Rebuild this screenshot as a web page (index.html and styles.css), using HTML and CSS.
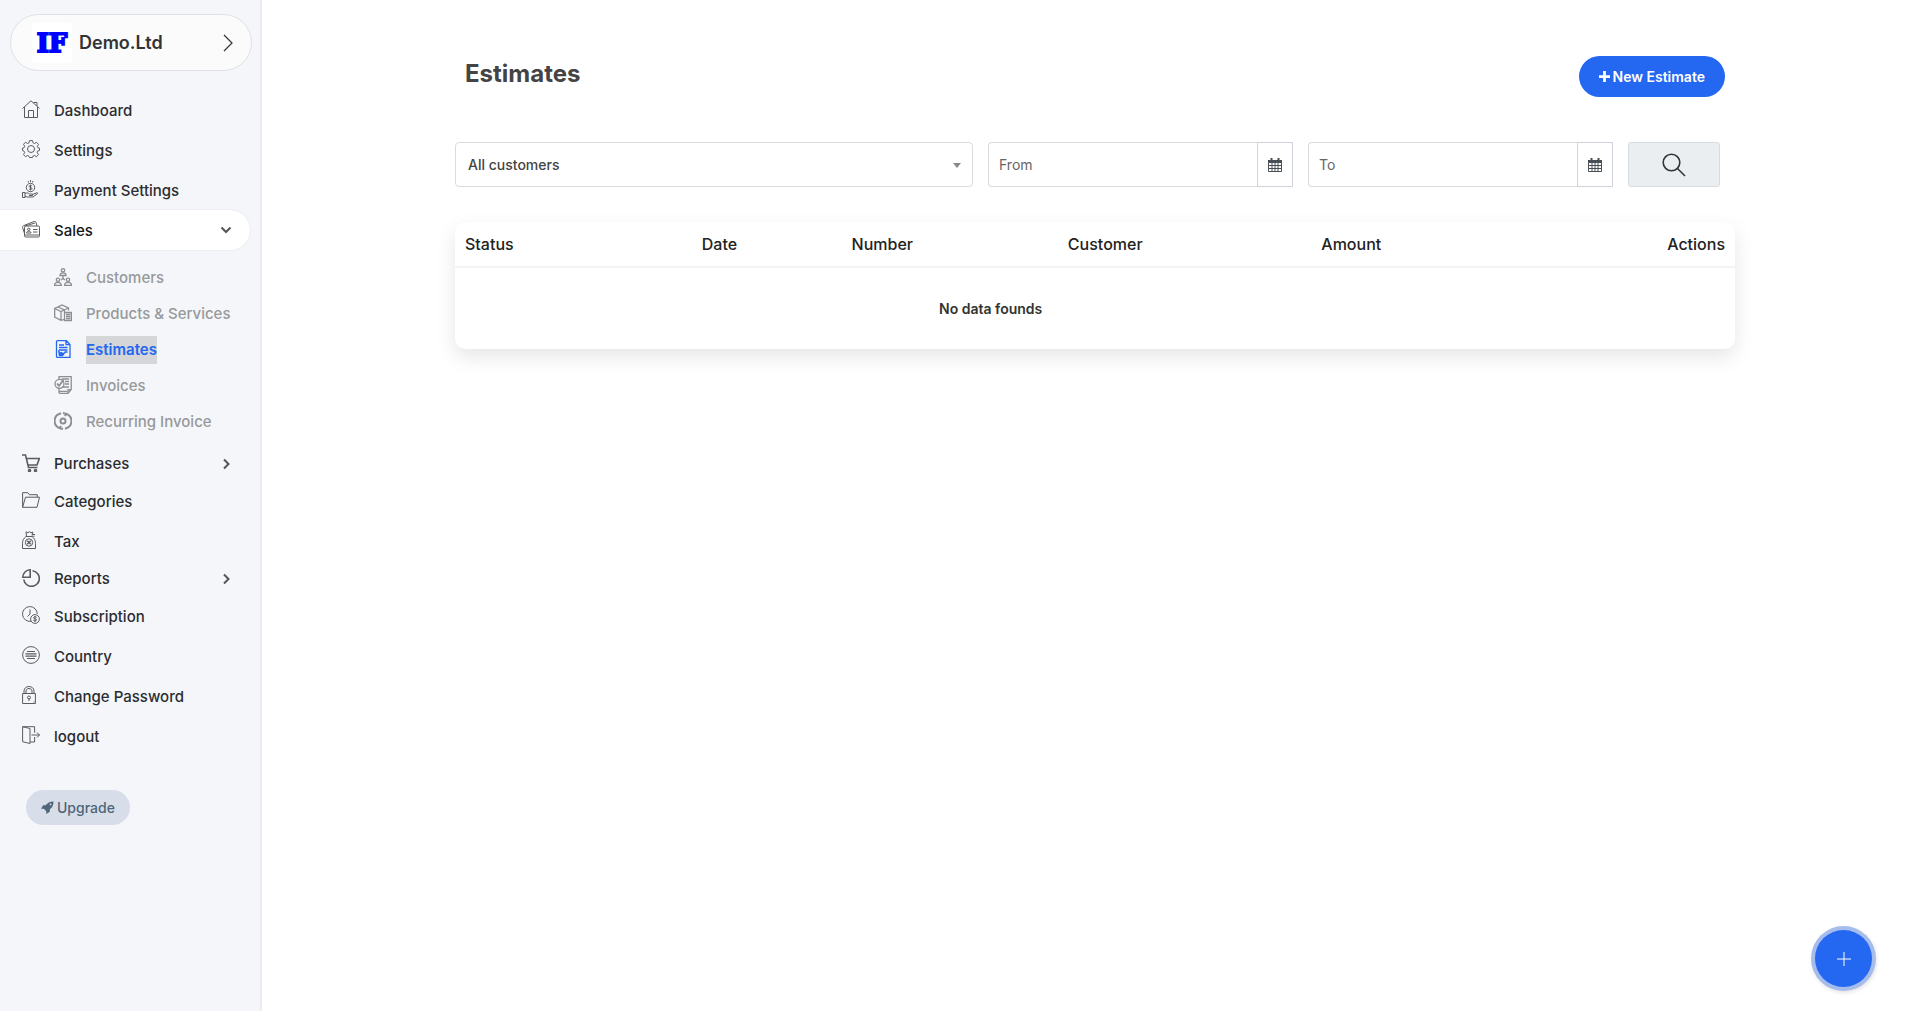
FILE: index.html
```html
<!DOCTYPE html>
<html lang="en">

<head>
    <meta charset="UTF-8">
    <meta name="viewport" content="width=device-width, initial-scale=1.0">
    <title>Estimates</title>
    <link rel="stylesheet" href="styles.css">
</head>

<body>

    <aside class="sidebar">
        <button class="company" type="button">
            <span class="company-logo">IF</span>
            <span class="company-name">Demo.Ltd</span>
            <svg class="company-arrow" viewBox="0 0 10 18"><path d="M1 1l8 8-8 8" /></svg>
        </button>

        <nav>
            <ul class="menu">
                <li><a href="#">
                    <svg class="icon" viewBox="0 0 18 18"><path d="M.5 8.500L9 .8l8.500 7.700M2.500 7v10.500h13V7M6.500 17.500v-7h5v7M11.500 2.500h3.500v3.500" /></svg>
                    <span>Dashboard</span>
                </a></li>
                <li><a href="#">
                    <svg class="icon" viewBox="0 0 18 18"><path d="M7.500.6h3l.5 2.200 1.500.7 2-1.200 2 2.100-1.200 2 .7 1.400 1.500.3v2.300l-1.700.6-.6 1.600 1.300 2-2.100 2.100-2-1.200-1.500.7-.4 1.300h-3l-.5-1.300-1.500-.7-2 1.200-2-2.100 1.200-2-.7-1.500L.5 10.400V8.100L2 7.800l.7-1.500-1.200-2 2-2.100 2 1.300L7 2.800z" /><circle cx="9" cy="9" r="3.500" /></svg>
                    <span>Settings</span>
                </a></li>
                <li><a href="#">
                    <svg class="icon" viewBox="0 0 18 18"><circle cx="8.500" cy="7.500" r="4.200" /><path d="M10 6c-.8-.9-3-.6-2.800.5.200 1.200 2.900.8 2.800 2-.1 1.200-2.300 1.200-3 .3M8.500 4.500v6M8.500 0v2M6.300 1v1.500M10.700 1v1.500M.5 12.500H3v5H.5zM3 13.500c2-1 3.500-.5 4.500.5h3v1.500H7M10.500 14.500l4.500-1.800c.8 0 .8.700.3 1.100L11 17H5l-2-.8" /></svg>
                    <span>Payment Settings</span>
                </a></li>
                <li class="open"><a href="#">
                    <svg class="icon" viewBox="0 0 18 18"><rect x="2.500" y="6" width="15" height="11" rx="1.200" /><path d="M2.500 13.500L.6 7.500C.4 6.500.8 6 1.500 5.700L12 1.500c1-.3 1.700 0 2 .8L15 6M3 6l10-3M2.500 15h15M11 9.500h4.500M11 12h4.500M4.500 13c0-2.500 4.500-2.500 4.500 0z" /><circle cx="6.800" cy="9.300" r="1.200" /></svg>
                    <span>Sales</span>
                    <svg class="chevron" viewBox="0 0 12 12"><path d="M1.500 3.500L6 8l4.500-4.500" /></svg>
                </a>
                    <ul class="submenu">
                        <li><a href="#">
                            <svg class="icon" viewBox="0 0 18 18"><circle cx="9" cy="2.300" r="1.700" /><circle cx="4" cy="11.800" r="1.700" /><circle cx="14" cy="11.800" r="1.700" /><path d="M6 7.500c0-3.500 6-3.500 6 0zM.6 17.400c0-4 6.800-4 6.800 0zM10.600 17.400c0-4 6.800-4 6.800 0zM9 7.500v3M9 10.500l-2 1.500M9 10.500l2 1.500" /></svg>
                            <span>Customers</span>
                        </a></li>
                        <li><a href="#">
                            <svg class="icon" viewBox="0 0 18 18"><path d="M10 15.500l-3 .9L.7 13V4.500L8 1l6.500 3v2.500M.7 4.500L7 7.500l7.500-3.500M7 7.500v9M4 3l6.500 3v3.500M10.500 8.500h7v8h-7zM12 10.500h4.500M12 12.500h4.500M12 14.500h4.500" /></svg>
                            <span>Products &amp; Services</span>
                        </a></li>
                        <li class="active"><a href="#">
                            <svg class="icon" viewBox="0 0 18 18"><path d="M3.500.7h8.800L16 4.500v12.800H3.500c-.7 0-1-.3-1-.9V1.600c0-.6.300-.9 1-.9zM12 .7v4h4M5 5h5M5 7.500h8.500M5 10h8.500M10.500 12h3" /><path d="M4.800 11.500l1.700 1.700 1-.7 1 1 2-.6-2 2.600H5.500z" fill="currentColor" /></svg>
                            <span>Estimates</span>
                        </a></li>
                        <li><a href="#">
                            <svg class="icon" viewBox="0 0 18 18"><path d="M5 3V.7h12.200v12.800L14 17.400H6.500c-1 0-1.500-.5-1.500-1.500V12M17 13.700h-3v3.500M5 15.300h8M7.500 3h7.500M11 5.500h4M11 8h4M8 11h7" /><circle cx="5.500" cy="7.800" r="4.500" /><path d="M3 7.500l2 2.300L9.500 4" stroke-width="1.800" /></svg>
                            <span>Invoices</span>
                        </a></li>
                        <li><a href="#">
                            <svg class="icon icon-bold" viewBox="0 0 18 18"><circle cx="9" cy="9" r="2.500" /><path d="M7 1.300C-1.500 3.500-1.500 14 6.500 16.500M11 16.700c8.500-2.200 8.500-12.700.5-15.200M9 1l3 .8-1 2.200M9 17l-3-.8 1-2.200" /></svg>
                            <span>Recurring Invoice</span>
                        </a></li>
                    </ul>
                </li>
                <li class="has-children"><a href="#">
                    <svg class="icon icon-bold" viewBox="0 0 18 18"><path d="M0 1h3.500l3 12.500h9M4.500 4.500h12.800l-2.300 6.500H6" /><circle cx="7.500" cy="16.500" r="1" /><circle cx="13.500" cy="16.500" r="1" /></svg>
                    <span>Purchases</span>
                    <svg class="chevron" viewBox="0 0 12 12"><path d="M4 1.500L8.500 6 4 10.500" /></svg>
                </a></li>
                <li><a href="#">
                    <svg class="icon" viewBox="0 0 18 18"><path d="M.6 16.300V1.700h5.200l1.500 2h8v2.500M.6 16.300L3.500 6.200h14l-2.500 10.100z" /></svg>
                    <span>Categories</span>
                </a></li>
                <li><a href="#">
                    <svg class="icon" viewBox="0 0 18 18"><path d="M4 5.500C1.500 7.500.5 9.500.5 12.500v5h13v-5c0-3-1-5-3.500-7zM4.500 5.500L4 .8l2 1 1.500-1.200L9 1.800l2-.8-1 2.500h3M9.500 5l3 .3" /><circle cx="7" cy="11.500" r="3.700" /><path d="M5.200 9.800l3.600 3.500M8.800 9.800l-3.600 3.500" stroke-width="1.300" /></svg>
                    <span>Tax</span>
                </a></li>
                <li class="has-children"><a href="#">
                    <svg class="icon icon-bold" viewBox="0 0 18 18"><path d="M8.200.8v7.400H.8A7.500 7.500 0 0 1 8.200.8zM10.500 1.800A7.800 7.800 0 1 1 1.800 10.500" /></svg>
                    <span>Reports</span>
                    <svg class="chevron" viewBox="0 0 12 12"><path d="M4 1.500L8.500 6 4 10.500" /></svg>
                </a></li>
                <li><a href="#">
                    <svg class="icon" viewBox="0 0 18 18"><path d="M9 15.300A7.400 7.400 0 1 1 15.300 8M8 3.500V8l-2.500 2.500" /><circle cx="13" cy="13" r="4.400" /><path d="M14.700 11.400c-.8-1-3.400-.7-3.200.5.200 1.200 3.200.8 3.100 2-.1 1.300-2.600 1.300-3.300.3M13 10v6" /></svg>
                    <span>Subscription</span>
                </a></li>
                <li><a href="#">
                    <svg class="icon" viewBox="0 0 18 18"><circle cx="9" cy="9" r="8.400" /><path d="M5 5.500h8M3.500 7.800h11M3.500 10.200h11M5 12.500h8" stroke-width="1.200" /></svg>
                    <span>Country</span>
                </a></li>
                <li><a href="#">
                    <svg class="icon" viewBox="0 0 18 18"><path d="M.6 7.500h12.800v10H.6zM2 7.500V5c0-6 10-6 10 0v2.500M4 7.500V5c0-3.300 6-3.300 6 0v2.500M7 12v3M11.500 16h1" /><circle cx="7" cy="11.500" r="1.500" /></svg>
                    <span>Change Password</span>
                </a></li>
                <li><a href="#">
                    <svg class="icon" viewBox="0 0 18 18"><path d="M.6.7L8 2.500v15L.6 15.700zM.6.7h12v6M12.600 11v5H8M9.500 9h8M15 6.500L17.500 9 15 11.500" /></svg>
                    <span>logout</span>
                </a></li>
            </ul>
        </nav>

        <button class="upgrade" type="button">
            <svg viewBox="0 0 14 14"><path d="M13.500.5C9.500.5 7 2 5 4.500H2.300L0 8.300h3l2.700 2.700v3l3.800-2.300V9c2.500-2 4-4.500 4-8.500zM10.300 4.700a1 1 0 1 1 0-2 1 1 0 0 1 0 2z" /></svg>
            Upgrade
        </button>
    </aside>

    <main class="main">
        <div class="container">
            <header class="page-header">
                <h1>Estimates</h1>
                <button class="btn-new" type="button">
                    <svg viewBox="0 0 12 12"><path d="M6 0v12M0 6h12" /></svg>
                    New Estimate
                </button>
            </header>

            <form class="filters">
                <div class="select-wrap">
                    <select aria-label="Customer">
                        <option>All customers</option>
                    </select>
                </div>
                <div class="date-group">
                    <input type="text" placeholder="From" aria-label="From">
                    <button type="button" aria-label="Pick start date">
                        <svg viewBox="0 0 14 14"><path class="fill" d="M0 2h14v3H0z" /><path d="M.5 2.500h13v11H.5zM.5 7.500h13M.5 10.500h13M4 5v8.500M7 5v8.500M10 5v8.500" /><path class="ring" d="M3.500 0v3.500M10.500 0v3.500" /></svg>
                    </button>
                </div>
                <div class="date-group">
                    <input type="text" placeholder="To" aria-label="To">
                    <button type="button" aria-label="Pick end date">
                        <svg viewBox="0 0 14 14"><path class="fill" d="M0 2h14v3H0z" /><path d="M.5 2.500h13v11H.5zM.5 7.500h13M.5 10.500h13M4 5v8.500M7 5v8.500M10 5v8.500" /><path class="ring" d="M3.500 0v3.500M10.500 0v3.500" /></svg>
                    </button>
                </div>
                <button class="btn-search" type="submit" aria-label="Search">
                    <svg viewBox="0 0 24 24"><circle cx="9.500" cy="9.500" r="8.300" /><path d="M15 15l8 8" /></svg>
                </button>
            </form>

            <div class="card">
                <table>
                    <colgroup>
                        <col class="col-status">
                        <col class="col-date">
                        <col class="col-number">
                        <col class="col-customer">
                        <col class="col-amount">
                        <col class="col-actions">
                    </colgroup>
                    <thead>
                        <tr>
                            <th>Status</th>
                            <th>Date</th>
                            <th>Number</th>
                            <th>Customer</th>
                            <th>Amount</th>
                            <th class="right">Actions</th>
                        </tr>
                    </thead>
                    <tbody>
                        <tr>
                            <td class="empty" colspan="5">No data founds</td>
                            <td></td>
                        </tr>
                    </tbody>
                </table>
            </div>
        </div>
    </main>

    <button class="fab" type="button" aria-label="Add">
        <svg viewBox="0 0 14 14"><path d="M7 0v14M0 7h14" /></svg>
    </button>

</body>

</html>
```
FILE: styles.css
```css
* {
    box-sizing: border-box;
}

body {
    margin: 0;
    min-height: 100vh;
    display: flex;
    font-family: Inter, "Liberation Sans", sans-serif;
    font-size: 14px;
    color: #2b2d30;
    background: #fff;
}

button,
input,
select {
    font-family: inherit;
    font-size: 14px;
}

button {
    cursor: pointer;
}

svg {
    display: block;
    flex: none;
    fill: none;
    stroke: currentColor;
}

/* Sidebar */
.sidebar {
    width: 262px;
    flex: none;
    padding-top: 14px;
    background: #f4f6fa;
    border-right: 2px solid #ececee;
}

.company {
    display: flex;
    align-items: center;
    width: 242px;
    height: 57px;
    margin: 0 0 19px 10px;
    padding: 0 18px 0 21px;
    background: #fbfbfb;
    border: 1px solid #dfe1e6;
    border-radius: 29px;
    color: #333;
}

.company-logo {
    width: 40px;
    height: 40px;
    margin-right: 7px;
    background: #fff;
    border-radius: 4px;
    font: bold 26px/40px "DejaVu Serif", serif;
    color: #0000ff;
    text-align: center;
    -webkit-text-stroke: 2px #0000ff;
}

.company-name {
    flex: 1;
    text-align: left;
    font-size: 18px;
    font-weight: 600;
}

.company-arrow {
    width: 10px;
    height: 18px;
    stroke-width: 1.2;
}

.menu,
.submenu {
    list-style: none;
    margin: 0;
    padding: 0;
}

.menu a {
    display: flex;
    align-items: center;
    height: 40px;
    margin-right: 10px;
    padding: 0 18px 0 22px;
    color: #2b2d30;
    font-size: 15px;
    font-weight: 500;
    text-decoration: none;
}

.menu a span {
    flex: 1;
}

.menu .has-children > a {
    height: 35px;
}

.menu .open > a {
    background: #fff;
    border-radius: 0 20px 20px 0;
    box-shadow: 0 0 2px rgba(0, 0, 0, 0.1);
    color: #151515;
}

.icon {
    width: 18px;
    height: 18px;
    margin: 0 14px 2px 0;
    color: #5a5c5f;
    stroke-width: 1;
}

.icon-bold {
    stroke-width: 1.6;
}

.chevron {
    width: 12px;
    height: 12px;
    color: #555;
    stroke-width: 2;
}

.submenu {
    padding: 10px 0 6px;
}

.menu .submenu a {
    height: 36px;
    padding: 0 0 0 54px;
    color: #97999b;
}

.submenu .icon {
    color: #8c8e90;
    stroke-width: 1.3;
}

.submenu .icon-bold {
    stroke-width: 2;
}

.menu .submenu span {
    flex: none;
    line-height: 28px;
}

.menu .submenu .active a {
    color: #2467f0;
    font-weight: 600;
}

.submenu .active .icon {
    color: #2467f0;
}

.submenu .active span {
    background: #d5d6d8;
}

.upgrade {
    display: flex;
    align-items: center;
    gap: 3px;
    height: 35px;
    margin: 34px 0 0 26px;
    padding: 0 15px;
    background: #d7deea;
    border: 0;
    border-radius: 18px;
    color: #4f6578;
    font-weight: 500;
}

.upgrade svg {
    width: 13px;
    height: 13px;
    fill: currentColor;
    stroke: none;
}

/* Main */
.main {
    flex: 1;
    padding: 56px 0 0 8px;
}

.container {
    max-width: 1280px;
    margin: 0 auto;
}

.page-header {
    display: flex;
    justify-content: space-between;
    padding: 0 10px;
    margin-bottom: 45px;
}

.page-header h1 {
    margin: 0;
    font-size: 24px;
    line-height: 36px;
    font-weight: 700;
    color: #444;
}

.btn-new {
    display: flex;
    align-items: center;
    gap: 3px;
    height: 41px;
    padding: 0 20px;
    background: #2467f0;
    border: 0;
    border-radius: 21px;
    color: #fff;
    font-weight: 600;
}

.btn-new svg {
    width: 11px;
    height: 11px;
    stroke-width: 3;
}

.filters {
    display: grid;
    grid-template-columns: 518fr 305fr 305fr 92fr;
    gap: 15px;
    padding-right: 15px;
    margin-bottom: 35px;
}

.select-wrap {
    position: relative;
}

.select-wrap::after {
    content: "";
    position: absolute;
    right: 12px;
    top: 21px;
    border: 4px solid transparent;
    border-top: 5px solid #888;
    border-bottom: 0;
    pointer-events: none;
}

.filters select {
    width: 100%;
    height: 45px;
    padding: 0 12px;
    appearance: none;
    background: #fff;
    border: 1px solid #d9dcde;
    border-radius: 4px;
    color: #444;
    font-weight: 500;
}

.date-group {
    display: flex;
}

.date-group input {
    flex: 1;
    min-width: 0;
    height: 45px;
    padding: 0 10px;
    border: 1px solid #d9dcde;
    border-right: 0;
    border-radius: 4px 0 0 4px;
}

.date-group input::placeholder {
    color: #666;
}

.date-group button {
    width: 36px;
    padding: 0 10px;
    background: #fff;
    border: 1px solid #ced4da;
    color: #495057;
}

.date-group svg {
    width: 14px;
    height: 14px;
}

.date-group .fill {
    fill: currentColor;
    stroke: none;
}

.date-group .ring {
    stroke-width: 2;
}

.btn-search {
    display: flex;
    align-items: center;
    justify-content: center;
    padding: 0;
    background: #ebeef1;
    border: 1px solid #d9dcde;
    border-radius: 3px;
    color: #333;
}

.btn-search svg {
    width: 24px;
    height: 24px;
    stroke-width: 1.6;
}

.card {
    background: #fff;
    border-radius: 10px;
    box-shadow: 0 8px 20px rgba(0, 0, 0, 0.1);
}

table {
    width: 100%;
    table-layout: fixed;
    border-collapse: separate;
    border-spacing: 0;
}

.col-status {
    width: 18.5%;
}

.col-date {
    width: 11.7%;
}

.col-number {
    width: 16.9%;
}

.col-customer {
    width: 19.8%;
}

.col-amount {
    width: 16.8%;
}

th {
    height: 46px;
    padding: 0 10px;
    border-bottom: 2px solid #f3f3f4;
    font-size: 16px;
    font-weight: 500;
    text-align: left;
    color: #222;
}

th.right {
    text-align: right;
}

td {
    height: 81px;
    padding: 0 10px;
}

.empty {
    text-align: center;
    font-weight: 600;
    color: #333;
}

.fab {
    position: fixed;
    right: 48px;
    bottom: 24px;
    display: flex;
    align-items: center;
    justify-content: center;
    width: 57px;
    height: 57px;
    padding: 0;
    background: #2467f0;
    border: 0;
    border-radius: 50%;
    box-shadow: 0 0 0 4px #a6bcec, 1px 2px 5px 3px rgba(0, 0, 0, 0.15);
    color: #fff;
}

.fab svg {
    width: 14px;
    height: 14px;
    stroke-width: 1;
}
```
